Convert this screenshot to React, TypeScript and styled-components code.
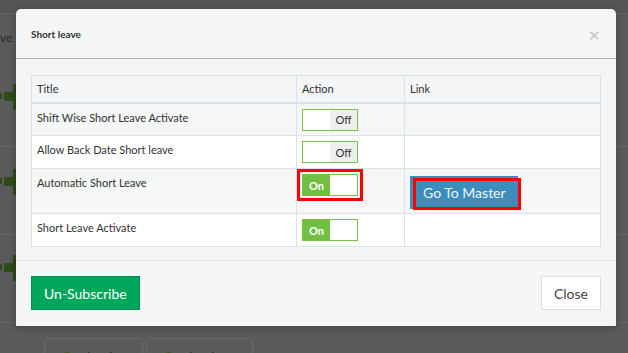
import React from "react";
import styled, { createGlobalStyle } from "styled-components";

const GlobalStyle = createGlobalStyle`
  html, body {
    margin: 0;
    padding: 0;
    background: #5a5a5a;
    font-family: Lato, "Open Sans", "Liberation Sans", sans-serif;
  }
  *, *::before, *::after {
    box-sizing: border-box;
  }
`;

const Screen = styled.div`
  position: relative;
  width: 628px;
  height: 353px;
  overflow: hidden;
  background: #5a5a5a;
`;

const PageTop = styled.div`
  height: 14px;
  background: #555555;
  border-bottom: 1px solid #656565;
`;

const PageBlock = styled.div<{ height: number; pad: number }>`
  height: ${(p) => p.height}px;
  padding-top: ${(p) => p.pad}px;
  border-bottom: 1px solid #666666;
  display: flex;
  flex-direction: column;
`;

const PageLabel = styled.div`
  font-size: 12px;
  color: #2b2b2b;
  height: 54px;
`;

const ArrowMark = styled.svg`
  display: block;
  width: 17px;
  height: 26px;
`;

const TabRow = styled.div`
  display: flex;
  gap: 3px;
  padding: 15px 0 0 44px;
`;

const PageTab = styled.div<{ width: number }>`
  width: ${(p) => p.width}px;
  height: 30px;
  border: 1px solid #6a6a6a;
  border-radius: 4px 4px 0 0;
  display: flex;
  align-items: flex-start;
  gap: 10px;
  padding: 10px 0 0 18px;
  font-size: 12px;
  color: #222;
`;

const TabDot = styled.span`
  width: 8px;
  height: 8px;
  margin-top: 3px;
  border-radius: 50%;
  background: #2f5a1c;
`;

const Modal = styled.div`
  position: absolute;
  top: 9px;
  left: 16px;
  width: 600px;
  height: 317px;
  background: #f4f5f5;
  border-radius: 5px 5px 0 0;
  box-shadow: 0 2px 6px rgba(0, 0, 0, 0.25);
  display: flex;
  flex-direction: column;
`;

const ModalHeader = styled.div`
  height: 50px;
  padding: 0 15px;
  border-bottom: 1px solid #b3b3b3;
  display: flex;
  align-items: center;
  justify-content: space-between;
`;

const ModalTitle = styled.h4`
  margin: 0;
  font-size: 10px;
  font-weight: 700;
  color: #333;
`;

const CloseX = styled.span`
  font-size: 20px;
  line-height: 1;
  color: #c2c2c2;
  margin-right: 1px;
  margin-top: 1px;
`;

const ModalBody = styled.div`
  padding: 16px 15px 13px;
`;

const Table = styled.table`
  width: 570px;
  border-collapse: collapse;
  border: 1px solid #dae1e9;
  font-size: 11px;
  color: #333;
`;

const HeadCell = styled.th<{ width?: number }>`
  width: ${(p) => (p.width ? `${p.width}px` : "auto")};
  height: 27px;
  padding: 0 5px;
  text-align: left;
  font-weight: 400;
  background: #f4f5f6;
  border: 1px solid #dae1e9;
  border-bottom: 2px solid #dae1e9;
`;

const Row = styled.tr<{ striped: boolean; height: number }>`
  height: ${(p) => p.height}px;
  background: ${(p) => (p.striped ? "#f5f6f6" : "#ffffff")};
`;

const Cell = styled.td`
  padding: 5px 5px 0;
  vertical-align: top;
  border: 1px solid #dae1e9;
`;

const TitleText = styled.div`
  line-height: 17px;
`;

const Toggle = styled.div<{ marked?: boolean }>`
  width: 56px;
  height: 22px;
  border: 1px solid #7ac143;
  display: flex;
  font-size: 11px;
  outline: ${(p) => (p.marked ? "3px solid #ff0000" : "none")};
  outline-offset: 2px;
`;

const ToggleHalf = styled.div<{ tone: "on" | "off" | "blank" }>`
  flex: 1;
  display: flex;
  align-items: center;
  justify-content: center;
  background: ${(p) =>
    p.tone === "on" ? "#73bf44" : p.tone === "off" ? "#eeeeee" : "#ffffff"};
  color: ${(p) => (p.tone === "on" ? "#ffffff" : "#333333")};
  font-weight: ${(p) => (p.tone === "on" ? 700 : 400)};
`;

const MasterButton = styled.button`
  position: relative;
  width: 108px;
  height: 33px;
  margin-top: 2px;
  padding: 0 0 0 13px;
  text-align: left;
  border: none;
  background: #3c8dbc;
  color: #f2f6f9;
  font-family: inherit;
  font-size: 14px;

  &::after {
    content: "";
    position: absolute;
    left: 3px;
    top: 2px;
    width: 108px;
    height: 32px;
    border: 3px solid #ff0000;
  }
`;

const ModalFooter = styled.div`
  border-top: 1px solid #e2e4e4;
  padding: 15px;
  display: flex;
  justify-content: space-between;
`;

const FooterButton = styled.button<{ variant: "success" | "default" }>`
  height: 34px;
  padding: 0 12px;
  font-family: inherit;
  font-size: 14px;
  border: 1px solid ${(p) => (p.variant === "success" ? "#008d4c" : "#dddddd")};
  background: ${(p) => (p.variant === "success" ? "#00a65a" : "#ffffff")};
  color: ${(p) => (p.variant === "success" ? "#ffffff" : "#444444")};
`;

const Arrow = () => (
  <ArrowMark viewBox="0 0 17 26">
    <rect x="0" y="9" width="2" height="6" fill="#2d4a1b" />
    <rect x="4" y="8" width="10" height="9" fill="#2d4a1b" />
    <rect x="13" y="0" width="3" height="26" fill="#2d4a1b" />
  </ArrowMark>
);

const SwitchCell = ({ on, marked }: { on: boolean; marked?: boolean }) => (
  <Toggle marked={marked}>
    {on ? (
      <>
        <ToggleHalf tone="on">On</ToggleHalf>
        <ToggleHalf tone="blank" />
      </>
    ) : (
      <>
        <ToggleHalf tone="blank" />
        <ToggleHalf tone="off">Off</ToggleHalf>
      </>
    )}
  </Toggle>
);

const settings = [
  { title: "Shift Wise Short Leave Activate", on: false, height: 33 },
  { title: "Allow Back Date Short leave", on: false, height: 33 },
  { title: "Automatic Short Leave", on: true, height: 45, link: true },
  { title: "Short Leave Activate", on: true, height: 33 },
];

const App = () => {
  return (
    <Screen>
      <GlobalStyle />
      <PageTop />
      <PageBlock height={133} pad={16}>
        <PageLabel>ve</PageLabel>
        <Arrow />
      </PageBlock>
      <PageBlock height={88} pad={22}>
        <Arrow />
      </PageBlock>
      <PageBlock height={88} pad={20}>
        <Arrow />
      </PageBlock>
      <TabRow>
        <PageTab width={99}>
          <TabDot />
          Shortleave
        </PageTab>
        <PageTab width={107}>
          <TabDot />
          Shortleave
        </PageTab>
      </TabRow>

      <Modal>
        <ModalHeader>
          <ModalTitle>Short leave</ModalTitle>
          <CloseX>×</CloseX>
        </ModalHeader>
        <ModalBody>
          <Table>
            <thead>
              <tr>
                <HeadCell width={265}>Title</HeadCell>
                <HeadCell width={108}>Action</HeadCell>
                <HeadCell>Link</HeadCell>
              </tr>
            </thead>
            <tbody>
              {settings.map((s, i) => (
                <Row key={s.title} striped={i % 2 === 0} height={s.height}>
                  <Cell>
                    <TitleText>{s.title}</TitleText>
                  </Cell>
                  <Cell>
                    <SwitchCell on={s.on} marked={s.link} />
                  </Cell>
                  <Cell>{s.link ? <MasterButton>Go To Master</MasterButton> : null}</Cell>
                </Row>
              ))}
            </tbody>
          </Table>
        </ModalBody>
        <ModalFooter>
          <FooterButton variant="success">Un-Subscribe</FooterButton>
          <FooterButton variant="default">Close</FooterButton>
        </ModalFooter>
      </Modal>
    </Screen>
  );
};

export default App;
